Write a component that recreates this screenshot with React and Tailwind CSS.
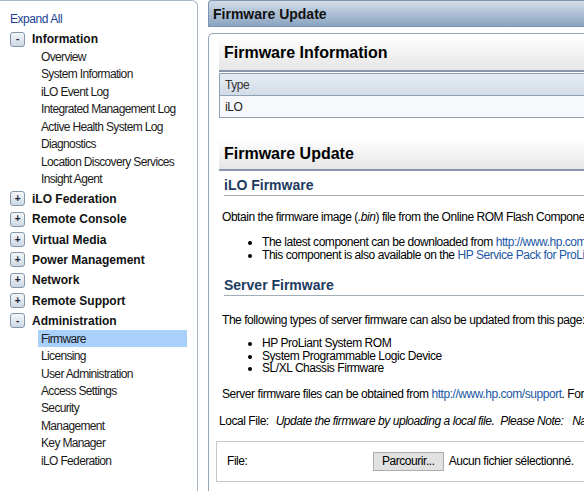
const infoItems = [
  "Overview",
  "System Information",
  "iLO Event Log",
  "Integrated Management Log",
  "Active Health System Log",
  "Diagnostics",
  "Location Discovery Services",
  "Insight Agent",
];

const collapsed = [
  "iLO Federation",
  "Remote Console",
  "Virtual Media",
  "Power Management",
  "Network",
  "Remote Support",
];

const adminItems = [
  "Firmware",
  "Licensing",
  "User Administration",
  "Access Settings",
  "Security",
  "Management",
  "Key Manager",
  "iLO Federation",
];

function Toggle({ sign }) {
  return (
    <span className="flex h-[15px] w-[15px] items-center justify-center rounded-[3px] border border-[#8496aa] bg-gradient-to-b from-[#f4f7fa] to-[#cdd8e3] text-[10px] font-bold leading-none text-[#223]">
      {sign}
    </span>
  );
}

function Category({ label, sign }) {
  return (
    <div className="flex h-[20.33px] items-center gap-[7px] pl-[10px]">
      <Toggle sign={sign} />
      <span className="whitespace-nowrap text-[12px] font-bold tracking-normal text-[#111]">{label}</span>
    </div>
  );
}

function SubList({ items, active }) {
  return (
    <div className="mt-[-1px] mb-[1px]">
      {items.map((it) => (
        <div
          key={it}
          className={
            "ml-[38px] mr-[10px] flex h-[17.43px] items-center whitespace-nowrap pl-[3px] text-[12px] tracking-[-0.65px] text-[#1a1a1a] " +
            (it === active ? "bg-[#a8d0fb]" : "")
          }
        >
          {it}
        </div>
      ))}
    </div>
  );
}

function SectionBox({ title, className = "" }) {
  return (
    <div
      className={
        "flex w-[420px] items-center border-b-2 border-[#8796aa] bg-gradient-to-b from-white to-[#e6e6e6] pl-[5px] text-[16px] font-bold tracking-normal text-black " +
        className
      }
    >
      {title}
    </div>
  );
}

function SubHeading({ title }) {
  return (
    <div className="ml-[5px] w-[420px] border-b border-[#a3adb8] pb-[1px] text-[14px] font-bold leading-[18px] tracking-normal text-[#1d3a5f]">
      {title}
    </div>
  );
}

export default function App() {
  return (
    <div
      className="flex h-[491px] w-[584px] overflow-hidden bg-white text-[12px] tracking-[-0.45px]"
      style={{ fontFamily: '"Liberation Sans", Arial, sans-serif' }}
    >
      {/* left navigation */}
      <aside className="h-full w-[198px] shrink-0 rounded-tr-[6px] border-t border-r border-[#a9b8c8] pt-[8px]">
        <div className="flex h-[20px] items-center pl-[10px] text-[12px] text-[#1c3f94]">
          Expand All
        </div>
        <Category label="Information" sign="-" />
        <SubList items={infoItems} />
        {collapsed.map((c) => (
          <Category key={c} label={c} sign="+" />
        ))}
        <Category label="Administration" sign="-" />
        <SubList items={adminItems} active="Firmware" />
      </aside>

      {/* main */}
      <main className="ml-[10px] w-[440px] shrink-0">
        <div className="flex h-[27px] items-center rounded-tl-[4px] border-t border-l border-b border-[#7b95b2] bg-gradient-to-b from-[#d3dde8] to-[#8aa4c0] pl-[4px] pt-[1px] text-[14px] font-bold tracking-normal text-[#111]">
          Firmware Update
        </div>

        <div className="mt-[6px] h-[460px] rounded-tl-[5px] border-t border-l border-[#93a8bd] pl-[10px] pt-[1px]">
          <SectionBox title="Firmware Information" className="h-[37px]" />
          <div className="mt-[1px] w-[420px] border border-[#8ea2b7]">
            <div className="flex h-[22px] items-center border-b border-[#8ea2b7] bg-gradient-to-b from-[#e6ecf2] to-[#d2dce7] pl-[5px] text-[12px] text-[#333]">
              Type
            </div>
            <div className="flex h-[21px] items-center bg-[#f6f8fb] pl-[5px] text-[12px] text-[#222]">
              iLO
            </div>
          </div>

          <div className="mt-[21px]">
            <SectionBox title="Firmware Update" className="h-[32px]" />
          </div>

          <div className="mt-[5px]">
            <SubHeading title="iLO Firmware" />
          </div>

          <p className="mt-[14px] ml-[3px] whitespace-nowrap leading-[14px] text-black">
            Obtain the firmware image (<i>.bin</i>) file from the Online ROM Flash Component for iLO.
          </p>
          <ul className="mt-[12px] ml-[33px] list-disc whitespace-nowrap pl-[10px] leading-[13px] text-black">
            <li>
              The latest component can be downloaded from{" "}
              <span className="text-[#2156a5]">http://www.hp.com/go/ilo</span>
            </li>
            <li>
              This component is also available on the{" "}
              <span className="text-[#2156a5]">HP Service Pack for ProLiant</span>
            </li>
          </ul>

          <div className="mt-[14px]">
            <SubHeading title="Server Firmware" />
          </div>

          <p className="mt-[17px] ml-[3px] whitespace-nowrap leading-[14px] text-black">
            The following types of server firmware can also be updated from this page:
          </p>
          <ul className="mt-[10px] ml-[33px] list-disc whitespace-nowrap pl-[10px] leading-[12.5px] text-black">
            <li>HP ProLiant System ROM</li>
            <li>System Programmable Logic Device</li>
            <li>SL/XL Chassis Firmware</li>
          </ul>

          <p className="mt-[12px] ml-[3px] whitespace-nowrap leading-[14px] text-black">
            Server firmware files can be obtained from{" "}
            <span className="text-[#2156a5]">http://www.hp.com/support</span>. For more information
          </p>

          <p className="mt-[13px] whitespace-nowrap leading-[14px] text-black">
            Local File:{" "}
            <i className="ml-[4px]">
              Update the firmware by uploading a local file.&nbsp; Please Note:&nbsp;&nbsp; Navigating away
            </i>
          </p>

          <div className="mt-[13px] ml-[-3px] flex h-[41px] w-[430px] items-center border border-[#c8c8c8] pl-[10px]">
            <span className="w-[146px]">File:</span>
            <span className="flex h-[19px] items-center border border-[#adadad] bg-[#e1e1e1] px-[8px] text-black">
              Parcourir...
            </span>
            <span className="ml-[5px] whitespace-nowrap">Aucun fichier sélectionné.</span>
          </div>
        </div>
      </main>
    </div>
  );
}
